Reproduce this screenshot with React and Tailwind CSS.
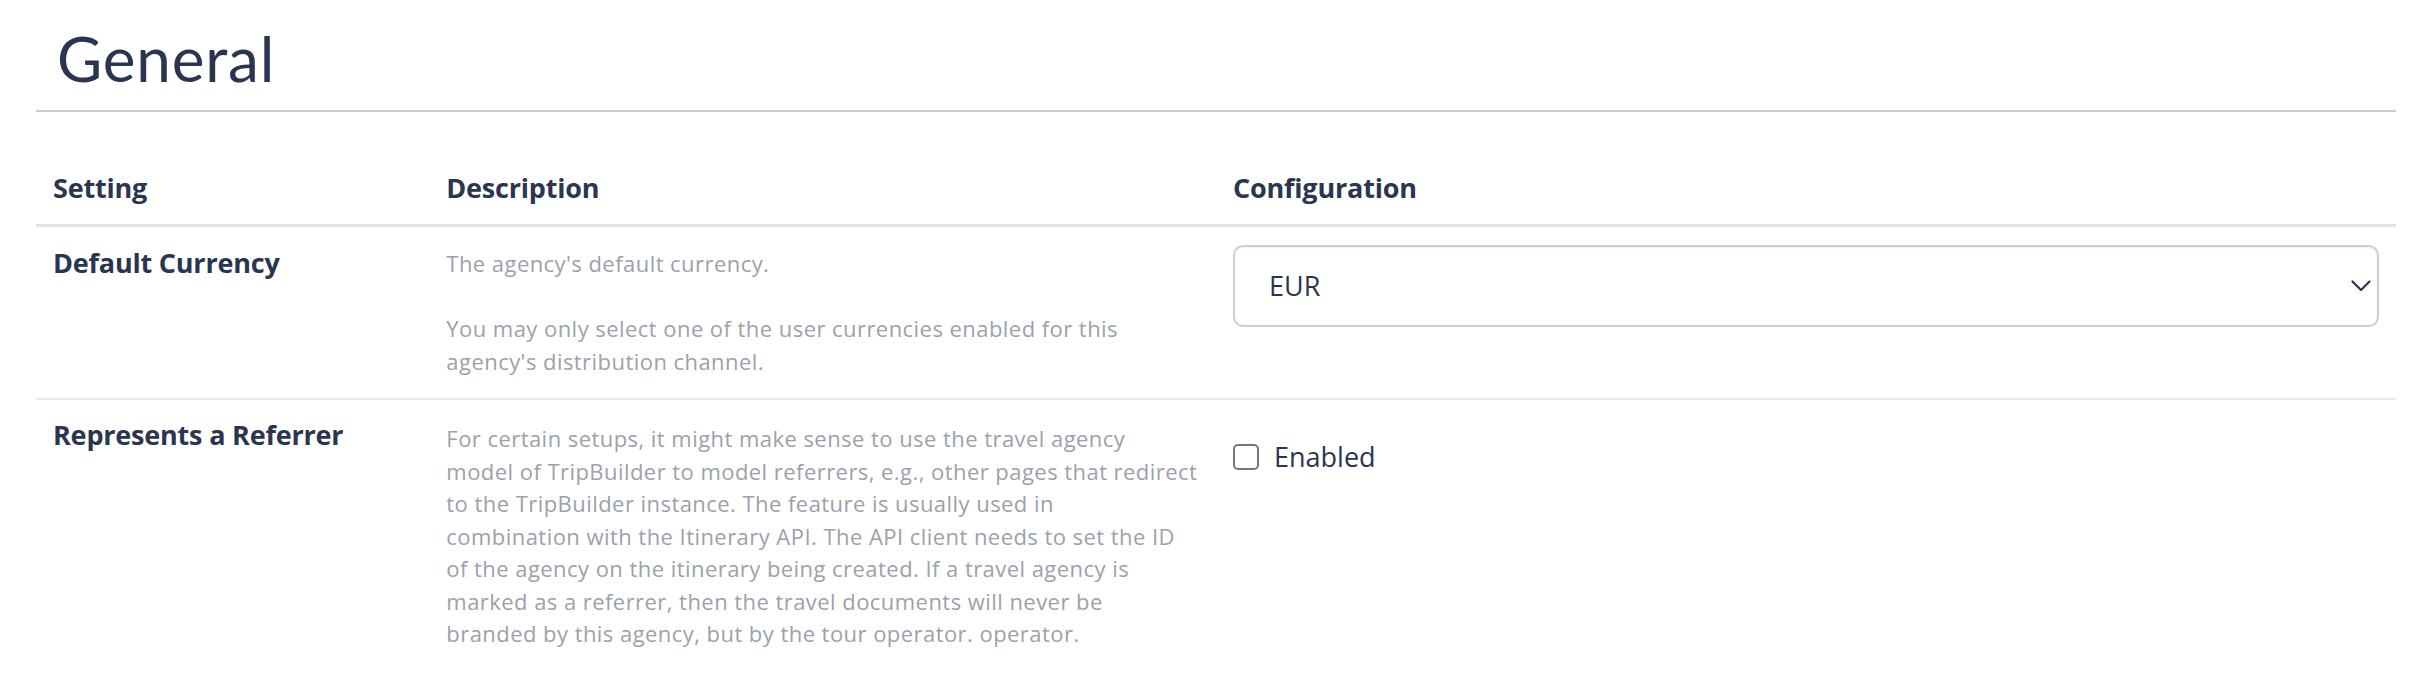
export default function App() {
  const row1Desc = [
    ["The agency's default currency."],
    [
      "You may only select one of the user currencies enabled for this",
      "agency's distribution channel.",
    ],
  ];
  const row2Desc = [
    "For certain setups, it might make sense to use the travel agency",
    "model of TripBuilder to model referrers, e.g., other pages that redirect",
    "to the TripBuilder instance. The feature is usually used in",
    "combination with the Itinerary API. The API client needs to set the ID",
    "of the agency on the itinerary being created. If a travel agency is",
    "marked as a referrer, then the travel documents will never be",
    "branded by this agency, but by the tour operator. operator.",
  ];

  return (
    <div className="w-full min-h-[678px] bg-white pl-[36px] pr-[34px] font-['Open_Sans',sans-serif] text-[#2a3551]">
      <h1 className="pl-[21px] pt-[21px] pb-[15px] font-['Lato',sans-serif] text-[62px] leading-[74px] font-normal tracking-[0.8px] border-b-2 border-[#cccccc]">
        General
      </h1>

      <div className="mt-[40px] grid grid-cols-[1fr_2fr_3fr] border-b-[3px] border-[#e5e5e5]">
        <div className="px-[17px] pt-[16px] pb-[16px] text-[27px] leading-[40px] font-bold tracking-[-0.2px]">
          Setting
        </div>
        <div className="px-[17px] pt-[16px] pb-[16px] text-[27px] leading-[40px] font-bold tracking-[-0.2px]">
          Description
        </div>
        <div className="px-[17px] pt-[16px] pb-[16px] text-[27px] leading-[40px] font-bold tracking-[-0.2px]">
          Configuration
        </div>
      </div>

      <div className="grid grid-cols-[1fr_2fr_3fr] border-b-2 border-[#e8e8e8]">
        <div className="px-[17px] pt-[16px] pb-[21px] text-[27px] leading-[40px] font-bold tracking-[-0.2px]">
          Default Currency
        </div>
        <div className="px-[17px] pt-[20px] pb-[21px] text-[22px] leading-[32.5px] text-[#9ca1ab] tracking-[0.45px]">
          {row1Desc.map((para, i) => (
            <p key={i} className={i === 0 ? "mb-[32.5px]" : ""}>
              {para.map((line, j) => (
                <span key={j} className="block whitespace-nowrap">
                  {line}
                </span>
              ))}
            </p>
          ))}
        </div>
        <div className="px-[17px] pt-[16px] pb-[21px]">
          <div className="mt-[2px] h-[82px] flex items-center justify-between rounded-[10px] border-2 border-[#cfcfcf] bg-white pl-[34px] pr-[6px] shadow-[inset_0_1px_2px_rgba(0,0,0,0.07)]">
            <span className="text-[27px] leading-[40px]">EUR</span>
            <svg width="20" height="12" viewBox="0 0 20 12" fill="none" className="mt-[-1px]">
              <path d="M1.5 1.5 L10 10 L18.5 1.5" stroke="#2a3551" strokeWidth="2.2" strokeLinecap="round" strokeLinejoin="round" />
            </svg>
          </div>
        </div>
      </div>

      <div className="grid grid-cols-[1fr_2fr_3fr]">
        <div className="px-[17px] pt-[15px] pb-[20px] text-[27px] leading-[40px] font-bold tracking-[-0.2px]">
          Represents a Referrer
        </div>
        <div className="px-[17px] pt-[22px] pb-[20px] text-[22px] leading-[32.5px] text-[#9ca1ab] tracking-[0.45px]">
          {row2Desc.map((line, j) => (
            <span key={j} className="block whitespace-nowrap">
              {line}
            </span>
          ))}
        </div>
        <div className="px-[17px] pt-[16px] pb-[20px]">
          <label className="mt-[21px] flex items-center gap-[15px]">
            <span className="block w-[26px] h-[26px] rounded-[5px] border-2 border-[#767676] bg-white"></span>
            <span className="text-[27px] leading-[40px]">Enabled</span>
          </label>
        </div>
      </div>
    </div>
  );
}
